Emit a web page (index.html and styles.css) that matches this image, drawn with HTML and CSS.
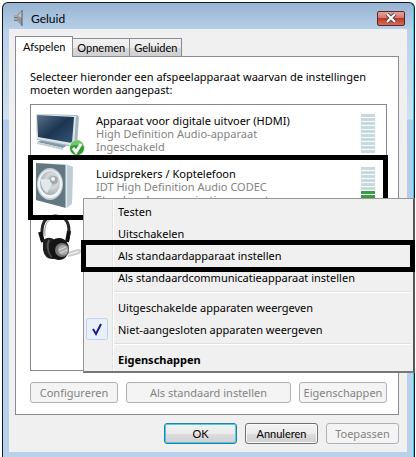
FILE: index.html
```html
<!DOCTYPE html>
<html lang="nl">
  <head>
    <meta charset="UTF-8" />
    <meta name="viewport" content="width=device-width, initial-scale=1.0" />
    <title>Geluid</title>
    <link rel="stylesheet" href="styles.css">
  </head>
  <body>
    <div class="window">
      <header class="titlebar">
        <svg class="title-icon" viewBox="0 0 16 16" width="16" height="16" aria-hidden="true">
          <path d="M2 5h4v6H2z" fill="#777" />
          <path d="M2 6h3M2 9h3" stroke="#ddd" />
          <path d="M5 5l5-5v16l-5-5z" fill="#92979a" />
          <path d="M6 6l4-5v7z" fill="#c3c7c9" />
          <path d="M10 0v16" stroke="#555d64" />
        </svg>
        <h1>Geluid</h1>
        <button class="close" aria-label="Sluiten">
          <svg viewBox="0 0 12 10" width="12" height="10" aria-hidden="true">
            <path d="M2 1l8 8M10 1l-8 8" stroke="#5b4350" stroke-width="4" />
            <path d="M2 1l8 8M10 1l-8 8" stroke="#fff" stroke-width="2" />
          </svg>
        </button>
      </header>

      <main class="content">
        <div class="tabs" role="tablist">
          <button class="tab active" role="tab" aria-selected="true">Afspelen</button>
          <button class="tab" role="tab">Opnemen</button>
          <button class="tab" role="tab">Geluiden</button>
        </div>

        <section class="panel">
          <p class="intro">Selecteer hieronder een afspeelapparaat waarvan de instellingen moeten worden aangepast:</p>

          <div class="devices">
            <div class="device">
              <svg class="device-icon" viewBox="0 0 50 48" width="50" height="48" aria-hidden="true">
                <defs>
                  <linearGradient id="screen" x1="0" y1="0" x2="1" y2="1">
                    <stop offset="0" stop-color="#5a7187" />
                    <stop offset=".5" stop-color="#1c3552" />
                    <stop offset="1" stop-color="#365777" />
                  </linearGradient>
                </defs>
                <path d="M2 34l9-3 23 5-6 4z" fill="#8299a9" />
                <path d="M2 34l26 6v2L2 36z" fill="#c2d0d9" />
                <path d="M1 6l41 1 2 2-2 29-4 1L2 32z" fill="#a7b6c1" />
                <path d="M1 6l40 2-2 30L2 31z" fill="#dbe4e9" />
                <path d="M2 7l37 2-2 26L3 29z" fill="url(#screen)" />
                <circle cx="42" cy="40" r="8" fill="#dce9d8" />
                <circle cx="42" cy="40" r="7" fill="#309b30" />
                <path d="M36 38a6 6 0 0 1 12 0q-6-2-12 0z" fill="#74c66b" />
                <path d="M38 40l3 4 5-8" fill="none" stroke="#fff" stroke-width="3" />
              </svg>
              <div class="device-text">
                <strong>Apparaat voor digitale uitvoer (HDMI)</strong>
                <span>High Definition Audio-apparaat</span>
                <span>Ingeschakeld</span>
              </div>
              <div class="meter">
                <i></i><i></i><i></i><i></i><i></i><i></i><i></i><i></i><i></i><i></i>
              </div>
            </div>

            <div class="device marked">
              <svg class="device-icon" viewBox="0 0 50 48" width="50" height="48" aria-hidden="true">
                <defs>
                  <radialGradient id="cone" cx=".6" cy=".4" r=".7">
                    <stop offset="0" stop-color="#8f999f" />
                    <stop offset=".4" stop-color="#d5dadd" />
                    <stop offset="1" stop-color="#97a3aa" />
                  </radialGradient>
                </defs>
                <path d="M1 2l30 1 7 3-1 37-5 4-31-8z" fill="#d8e4ea" />
                <path d="M32 4l6 2-1 37-5 3z" fill="#bdcdd5" />
                <path d="M1 2l30 2v43L1 39z" fill="#637783" />
                <path d="M31 4v43" stroke="#e9f0f3" />
                <ellipse cx="15" cy="23" rx="13" ry="16" fill="#c6d0d5" />
                <ellipse cx="15" cy="23" rx="12" ry="14" fill="#f3f5f6" />
                <ellipse cx="15" cy="22" rx="10" ry="12" fill="url(#cone)" />
                <path d="M6 18l13 1-7 13q-7-5-6-14z" fill="#e5e8ea" />
                <circle cx="19" cy="19" r="4" fill="#a3abb0" />
                <circle cx="18" cy="18" r="2" fill="#f1f3f4" />
              </svg>
              <div class="device-text">
                <strong>Luidsprekers / Koptelefoon</strong>
                <span>IDT High Definition Audio CODEC</span>
                <span>Standaardcommunicatieapparaat</span>
              </div>
              <div class="meter">
                <i></i><i></i><i></i><i></i><i></i><i></i><i class="on"></i><i class="on"></i><i class="on"></i><i class="on"></i>
              </div>
            </div>

            <div class="device">
              <svg class="device-icon" viewBox="0 0 50 48" width="50" height="48" aria-hidden="true">
                <path d="M27 41l16-5q4 0 1 3l-11 3" fill="none" stroke="#ccc" stroke-width="2" />
                <path d="M7 26C6 9 9 3 20 2c12 0 16 8 13 23" fill="none" stroke="#272727" stroke-width="3" />
                <path d="M10 22C9 11 12 5 20 4" fill="none" stroke="#929292" />
                <path d="M5 18l3 10M34 17l-2 11" stroke="#111" stroke-width="4" />
                <path d="M8 26q7-5 13 1l3 10-5 8q-9 1-11-9z" fill="#202020" />
                <path d="M14 26q-4 8 3 17" fill="none" stroke="#555" stroke-width="2" />
                <ellipse cx="24" cy="35" rx="10" ry="11" fill="#151515" />
                <ellipse cx="27" cy="36" rx="7" ry="7" fill="#777" />
                <ellipse cx="28" cy="36" rx="5" ry="5" fill="#aaa" />
                <path d="M24 36l7-3M25 39l7-3" stroke="#ddd" />
              </svg>
            </div>

            <ul class="menu" role="menu">
              <li><button role="menuitem">Testen</button></li>
              <li><button role="menuitem">Uitschakelen</button></li>
              <li class="marked"><button role="menuitem">Als standaardapparaat instellen</button></li>
              <li><button role="menuitem">Als standaardcommunicatieapparaat instellen</button></li>
              <li class="separator" role="separator"></li>
              <li><button role="menuitem">Uitgeschakelde apparaten weergeven</button></li>
              <li>
                <button role="menuitemcheckbox" aria-checked="true">
                  <svg class="check" viewBox="0 0 22 22" width="22" height="22" aria-hidden="true">
                    <rect x=".5" y=".5" width="21" height="21" rx="2" fill="#e9f0fa" stroke="#bcd2ee" />
                    <path d="M7 11l3 5 5-10" fill="none" stroke="#1c1c8c" stroke-width="2" />
                  </svg>
                  Niet-aangesloten apparaten weergeven
                </button>
              </li>
              <li class="separator" role="separator"></li>
              <li><button class="default" role="menuitem">Eigenschappen</button></li>
            </ul>
          </div>

          <div class="panel-buttons">
            <button class="btn" disabled>Configureren</button>
            <button class="btn wide" disabled>Als standaard instellen</button>
            <button class="btn" disabled>Eigenschappen</button>
          </div>
        </section>

        <footer class="actions">
          <button class="btn primary">OK</button>
          <button class="btn">Annuleren</button>
          <button class="btn" disabled>Toepassen</button>
        </footer>
      </main>
    </div>
  </body>
</html>
```
FILE: styles.css
```css
* {
  box-sizing: border-box;
}

body {
  margin: 0;
  padding: 2px 1px 0 2px;
  background: #fff;
  font-family: "Noto Sans", "Open Sans", sans-serif;
  font-size: 11px;
  line-height: 13px;
  color: #000;
}

button {
  font: inherit;
  color: inherit;
  margin: 0;
  padding: 0;
  white-space: nowrap;
}

.window {
  border: 1px solid #10171d;
  border-bottom: 0;
  border-radius: 6px 6px 0 0;
  padding: 0 7px 5px 6px;
  background: linear-gradient(#98b4d2, #b9d1ea 28px, #cfe0f1 116px, #b0cce8 117px, #b9d1ea 300px);
  box-shadow: inset -1px 0 #35c3e6;
}

.titlebar {
  display: flex;
  align-items: center;
  height: 26px;
  padding: 4px 2px 0 3px;
}

.titlebar h1 {
  flex: 1;
  margin: 0 0 0 3px;
  font-family: Lato, sans-serif;
  font-size: 12px;
  font-weight: normal;
}

.close {
  display: flex;
  align-items: center;
  justify-content: center;
  width: 28px;
  height: 15px;
  border: 1px solid #55262a;
  border-radius: 2px;
  background: linear-gradient(#e5a59a, #d47769 45%, #b93b28 50%, #d56e56);
}

.content {
  padding: 7px 8px 8px 6px;
  background: #f0f0f0;
}

.tabs {
  display: flex;
  align-items: flex-end;
}

.tab {
  height: 18px;
  padding: 0 4px;
  border: 1px solid #898c95;
  border-bottom: 0;
  border-left-width: 0;
  background: linear-gradient(#f2f2f2, #ebebeb 50%, #dadada 50%, #d0d0d0);
  font-family: Lato, sans-serif;
}

.tab.active {
  position: relative;
  z-index: 1;
  height: 21px;
  margin-bottom: -1px;
  padding: 0 7px 2px;
  border-left-width: 1px;
  background: #fff;
}

.panel {
  padding: 13px 11px 11px 14px;
  border: 1px solid #898c95;
  background: #fff;
}

.intro {
  margin: 0 0 8px;
}

.devices {
  position: relative;
  height: 267px;
  border: 1px solid #828790;
}

.device {
  position: relative;
  display: flex;
  height: 53px;
  padding: 9px 11px 0 4px;
}

.device.marked {
  z-index: 1;
}

.device-icon {
  flex: none;
  margin-top: -6px;
}

.device-text {
  display: flex;
  flex: 1;
  flex-direction: column;
  padding-left: 11px;
  color: #838383;
}

.device-text strong {
  font-weight: normal;
  color: #000;
}

.meter {
  display: flex;
  flex-direction: column;
  gap: 1px;
  width: 14px;
}

.meter i {
  height: 3px;
  background: #c5dae0;
}

.meter .on {
  background: #399c40;
}

/* heavy frames around the chosen device and the chosen command */
.marked::after {
  content: "";
  position: absolute;
  border: 5px solid #000;
  pointer-events: none;
}

.device.marked::after {
  inset: -3px -2px -9px -3px;
}

.menu {
  position: absolute;
  z-index: 2;
  top: 93px;
  left: 52px;
  right: -29px;
  margin: 0;
  padding: 1px 2px;
  list-style: none;
  border: 1px solid #979797;
  border-right: 2px solid #555;
  border-bottom: 2px solid #777;
  background: linear-gradient(90deg, #f0f0f0 28px, #e2e2e2 28px, #e2e2e2 29px, #fff 29px, #fff 30px, #f0f0f0 30px);
}

.menu li {
  position: relative;
}

.menu button {
  display: flex;
  align-items: center;
  width: 100%;
  height: 22px;
  padding-left: 32px;
  border: 0;
  background: none;
}

.menu .marked {
  z-index: 1;
}

.menu .marked::after {
  inset: -4px -4px -6px -5px;
}

.menu .separator {
  height: 2px;
  margin: 3px 0 3px 28px;
  border-top: 1px solid #e0e0e0;
  border-bottom: 1px solid #fff;
}

.menu .default {
  font-weight: bold;
}

.check {
  position: absolute;
  left: 0;
}

.panel-buttons {
  display: flex;
  gap: 8px;
  margin-top: 11px;
}

.btn {
  flex: 0 0 88px;
  height: 21px;
  border: 1px solid #707070;
  border-radius: 3px;
  background: linear-gradient(#f3f3f3, #ebebeb 50%, #dddddd 50%, #cfcfcf);
  box-shadow: inset 0 0 0 1px #fafafa;
  font-family: Lato, sans-serif;
}

.btn.wide {
  flex: 1;
}

.btn:disabled {
  border-color: #adb2b5;
  background: #f4f4f4;
  color: #838383;
  box-shadow: none;
  font-family: inherit;
}

.btn.primary {
  border-color: #2c7d9e;
  box-shadow: inset 0 0 0 1px #48cdf0;
}

.actions {
  display: flex;
  justify-content: flex-end;
  gap: 8px;
  margin-top: 8px;
}

.actions .btn {
  flex: 0 0 73px;
}
```
